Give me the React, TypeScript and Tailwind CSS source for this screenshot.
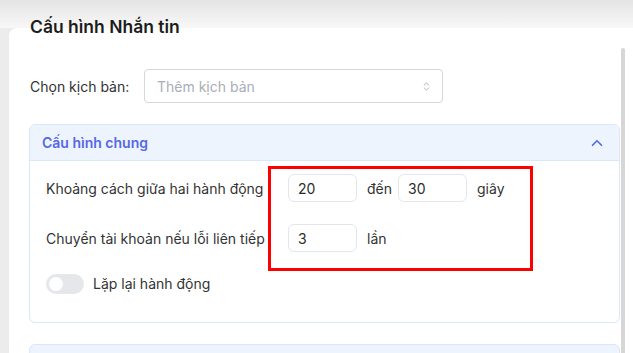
import { ChevronUp, ChevronsUpDown } from "lucide-react";

function NumBox({ value }: { value: string }) {
  return (
    <div className="w-[69px] h-[28px] rounded-[6px] border border-[#e3e6ec] bg-white flex items-center pl-[9px] text-[14px] text-[#2b2b2b]">
      {value}
    </div>
  );
}

export default function App() {
  return (
    <div
      className="relative w-[633px] h-[353px] overflow-hidden bg-[#ececec] flex flex-col"
      style={{ fontFamily: "Inter, 'Noto Sans', sans-serif" }}
    >
      {/* top fade */}
      <div className="h-[28px] shrink-0 bg-gradient-to-b from-[#e4e4e4] to-[#f8f8f8]" />

      <div className="flex flex-1">
        <div className="w-[9px] shrink-0" />

        {/* card */}
        <div className="relative flex-1 bg-white rounded-tl-[8px] pl-[20px] pr-[13px]">
          <h1 className="relative -mt-[13px] ml-[1px] text-[17.5px] leading-[24px] font-semibold text-[#1c1c1c]">
            Cấu hình Nhắn tin
          </h1>

          <div className="mt-[30px] flex items-center">
            <span className="w-[115px] pl-[1px] text-[14px] text-[#333]">Chọn kịch bản:</span>
            <div className="w-[299px] h-[34px] rounded-[4px] border border-[#d3d7de] flex items-center justify-between pl-[12px] pr-[10px]">
              <span className="text-[14px] text-[#a9adb6]">Thêm kịch bản</span>
              <ChevronsUpDown size={11} strokeWidth={1.5} className="text-[#8b8f97]" />
            </div>
          </div>

          {/* accordion */}
          <div className="mt-[21px] rounded-[6px] border border-[#dbe6fa] overflow-hidden">
            <div className="h-[36px] bg-[#eef4fe] border-b border-[#dbe6fa] flex items-center justify-between pl-[12px] pr-[13px]">
              <span className="text-[14px] font-semibold text-[#5468e6]">Cấu hình chung</span>
              <ChevronUp size={18} strokeWidth={2.2} className="text-[#5468e6]" />
            </div>

            <div className="pl-[16px] pt-[13px] pb-[28px] flex flex-col">
              <div className="flex items-center">
                <span className="w-[242px] text-[14px] text-[#333]">Khoảng cách giữa hai hành động</span>
                <NumBox value="20" />
                <span className="ml-[10px] text-[14px] text-[#333]">đến</span>
                <div className="ml-[6px]">
                  <NumBox value="30" />
                </div>
                <span className="ml-[10px] text-[14px] text-[#333]">giây</span>
              </div>

              <div className="mt-[22px] flex items-center">
                <span className="w-[242px] text-[14px] text-[#333]">Chuyển tài khoản nếu lỗi liên tiếp</span>
                <NumBox value="3" />
                <span className="ml-[10px] text-[14px] text-[#333]">lần</span>
              </div>

              <div className="mt-[21px] flex items-center">
                <div className="w-[38px] h-[20px] rounded-full bg-[#e5e7eb] flex items-center pl-[3px]">
                  <div className="w-[14px] h-[14px] rounded-full bg-white" />
                </div>
                <span className="ml-[9px] text-[14px] text-[#333]">Lặp lại hành động</span>
              </div>
            </div>
          </div>

          {/* next accordion (cut off) */}
          <div className="mt-[21px] h-[40px] rounded-t-[6px] border border-[#dbe6fa] bg-[#eef4fe]" />

          {/* scrollbar */}
          <div className="absolute right-[8px] top-[20px] w-[4px] h-[320px] rounded-full bg-[#d6d6d6]" />
        </div>
      </div>

      {/* red highlight annotation */}
      <div className="absolute left-[268px] top-[166px] w-[265px] h-[105px] border-[3px] border-[#ff0000]" />
    </div>
  );
}
